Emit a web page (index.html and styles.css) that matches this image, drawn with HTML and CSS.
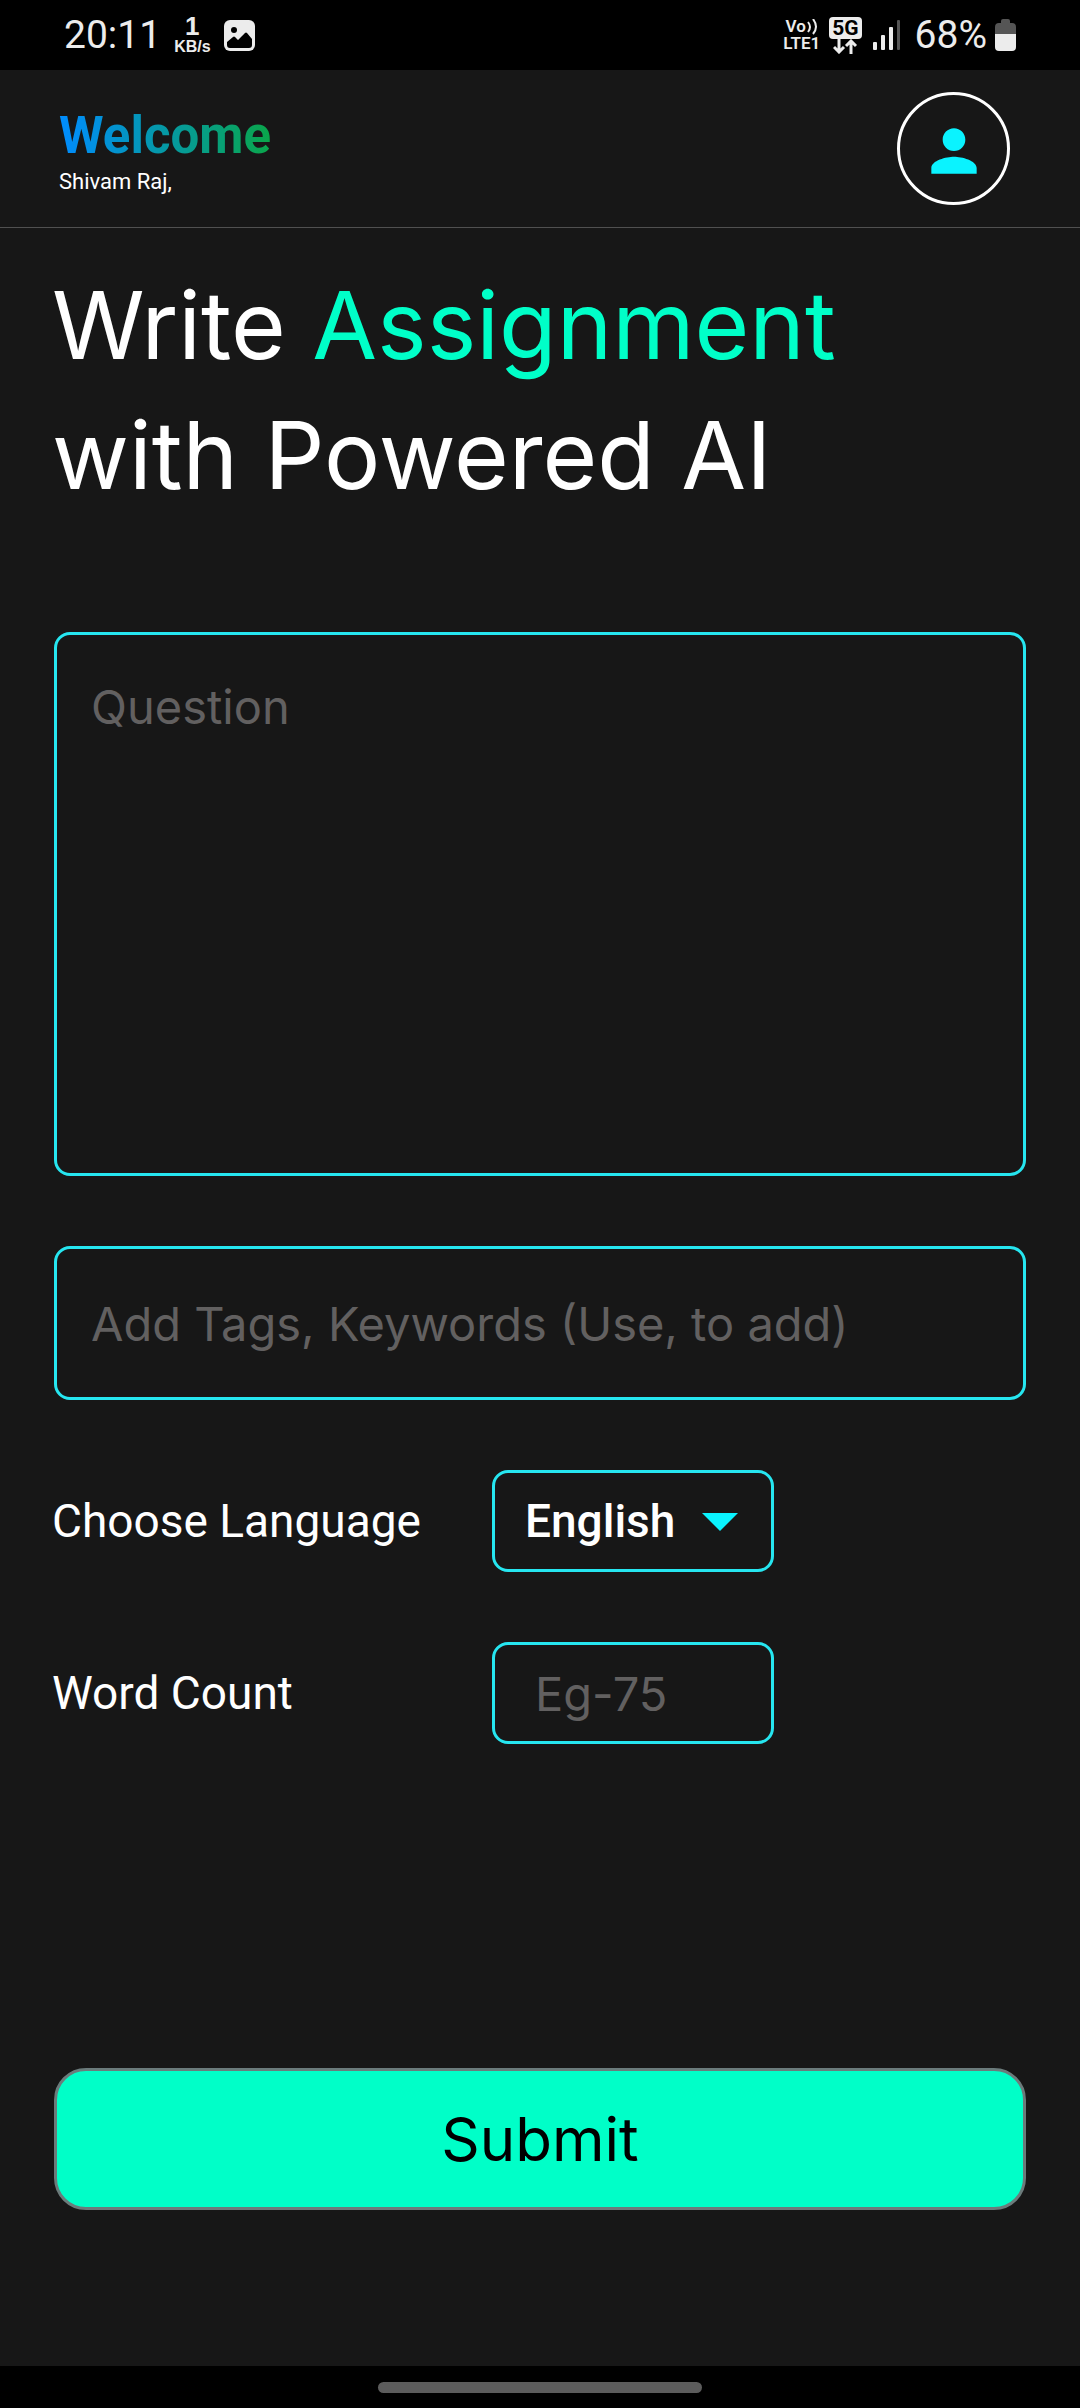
FILE: index.html
```html
<!DOCTYPE html>
<html lang="en">
<head>
<meta charset="utf-8">
<meta name="viewport" content="width=device-width, initial-scale=1">
<title>Write Assignment</title>
<link rel="stylesheet" href="styles.css">
</head>
<body>
<div class="status">
  <div class="status-group">
    <span class="clock">20:11</span>
    <span class="speed"><b class="speed-value">1</b><span class="speed-unit">KB/s</span></span>
    <svg class="picture" width="31" height="31" viewBox="0 0 31 31" aria-hidden="true">
      <rect width="31" height="31" rx="6" fill="#ececec"/>
      <circle cx="10" cy="10" r="3" fill="#000"/>
      <path d="M3 22 9 17q1-1 2 0l3 3 7-7q1-1 2 0l5 6v6q0 3-3 3H6q-3 0-3-3z" fill="#000"/>
    </svg>
  </div>
  <div class="status-group status-right">
    <span class="volte">
      <span class="volte-line">Vo<svg width="11" height="16" viewBox="0 0 11 16" fill="none" stroke="#ececec" stroke-width="2" aria-hidden="true"><path d="M1 3q4 5 0 10M6 0q6 8 0 15"/></svg></span>
      <span class="volte-line">LTE1</span>
    </span>
    <span class="network">
      <b class="badge">5G</b>
      <svg width="25" height="15" viewBox="0 0 25 15" fill="none" stroke="#ececec" stroke-width="3" aria-hidden="true"><path d="M6 0v13M1 8l5 5 5-5M18 15V2M13 7l5-5 5 5"/></svg>
    </span>
    <svg class="signal" width="28" height="30" viewBox="0 0 28 30" fill="#ececec" aria-hidden="true">
      <rect y="22" width="4" height="8" rx="1"/><rect x="8" y="15" width="4" height="15" rx="1"/><rect x="16" y="7" width="4" height="23" rx="1"/><rect x="24" width="3" height="30" rx="1" fill="#555"/>
    </svg>
    <span class="clock">68%</span>
    <svg class="battery" width="21" height="32" viewBox="0 0 21 32" aria-hidden="true">
      <path d="M6 4V2q0-2 2-2h5q2 0 2 2v2h2q4 0 4 4v7H0V8q0-4 4-4z" fill="#555"/>
      <path d="M0 15h21v13q0 4-4 4H4q-4 0-4-4z" fill="#ececec"/>
    </svg>
  </div>
</div>

<header class="header">
  <div class="greeting">
    <p class="welcome">Welcome</p>
    <p class="name">Shivam Raj,</p>
  </div>
  <button class="avatar" type="button" aria-label="Profile">
    <svg width="68" height="68" viewBox="0 0 24 24" fill="#0af3ff" aria-hidden="true"><path d="M12 12c2.21 0 4-1.79 4-4s-1.79-4-4-4-4 1.79-4 4 1.79 4 4 4zm0 2c-2.67 0-8 1.34-8 4v2h16v-2c0-2.66-5.33-4-8-4z"/></svg>
  </button>
</header>

<main class="main">
  <h1 class="title">Write <span class="accent">Assignment</span><br>with Powered AI</h1>
  <form class="form">
    <textarea class="field question" placeholder="Question" aria-label="Question"></textarea>
    <input class="field tags" type="text" placeholder="Add Tags, Keywords (Use, to add)" aria-label="Tags">
    <div class="row">
      <label class="label" for="language">Choose Language</label>
      <div class="select">
        <select class="field language" id="language"><option>English</option></select>
        <svg class="arrow" width="36" height="18" viewBox="0 0 36 18" aria-hidden="true"><path d="M0 0h36L18 18z" fill="#0af3ff"/></svg>
      </div>
    </div>
    <div class="row">
      <label class="label" for="count">Word Count</label>
      <input class="field count" id="count" type="text" inputmode="numeric" placeholder="Eg-75">
    </div>
    <button class="submit" type="submit">Submit</button>
  </form>
</main>

<div class="nav"><span class="handle"></span></div>
</body>
</html>
```
FILE: styles.css
```css
* { box-sizing: border-box; }

body {
  margin: 0;
  min-height: 100vh;
  display: flex;
  flex-direction: column;
  background: #171717;
  color: #fff;
  font-family: Roboto, sans-serif;
}

p, h1 { margin: 0; }

.status {
  display: flex;
  justify-content: space-between;
  align-items: center;
  height: 70px;
  padding: 0 64px;
  background: #000;
  color: #ececec;
}

.status-group { display: flex; align-items: center; gap: 13px; }
.status-right { gap: 9px; }
.clock { font-size: 39px; line-height: 48px; }

.speed {
  display: flex;
  flex-direction: column;
  align-items: center;
  font-family: "Liberation Sans", sans-serif;
  font-weight: 700;
}
.speed-value { font-size: 26px; line-height: 24px; }
.speed-unit { font-size: 16px; line-height: 18px; }

.volte { display: flex; flex-direction: column; align-items: center; }
.volte-line {
  display: flex;
  align-items: center;
  gap: 1px;
  font-size: 17px;
  line-height: 17px;
  font-weight: 600;
}

.network { display: flex; flex-direction: column; align-items: center; margin-right: 2px; }
.badge {
  padding: 0 3px;
  border-radius: 4px;
  background: #ececec;
  color: #000;
  font-size: 21px;
  line-height: 22px;
}

.signal { margin-right: 5px; }
.battery { margin-left: -1px; }

.header {
  display: flex;
  justify-content: space-between;
  align-items: center;
  height: 158px;
  padding: 0 70px 0 59px;
  border-bottom: 1px solid #505050;
}

.greeting { padding-top: 7px; }

.welcome {
  width: max-content;
  font-size: 51px;
  line-height: 60px;
  font-weight: 700;
  background: linear-gradient(90deg, #008cff, #0aa64a);
  background-clip: text;
  -webkit-background-clip: text;
  color: transparent;
}
.name { font-size: 22px; line-height: 32px; }

.avatar {
  display: flex;
  align-items: center;
  justify-content: center;
  width: 113px;
  height: 113px;
  padding: 4px 0 0;
  border: 3px solid #fff;
  border-radius: 50%;
  background: none;
}

.main { flex: 1; padding: 32px 54px 0 52px; }

.title {
  font-family: Inter, sans-serif;
  font-size: 94px;
  line-height: 130px;
  font-weight: 400;
}
.accent { color: #00ffc8; }

.form { display: flex; flex-direction: column; margin-top: 112px; }

.field {
  display: block;
  width: 100%;
  margin: 0;
  padding: 0 34px;
  border: 3px solid #26e6f0;
  border-radius: 16px;
  background: none;
  color: #fff;
  font-family: Inter, sans-serif;
  font-size: 47px;
  line-height: 60px;
  outline: none;
}
.field::placeholder { color: #626060; opacity: 1; }

.question, .tags { width: auto; margin-left: 2px; }
.question { height: 544px; padding-top: 42px; resize: none; }
.tags { height: 154px; margin-top: 70px; }

.row {
  display: grid;
  grid-template-columns: 440px 282px;
  align-items: center;
  margin-top: 70px;
}
.label { font-size: 46px; line-height: 60px; }

.select { position: relative; }
.language {
  height: 102px;
  padding: 0 30px;
  appearance: none;
  font-family: Roboto, sans-serif;
  font-size: 46px;
  font-weight: 500;
}
.arrow {
  position: absolute;
  top: 43px;
  right: 36px;
  pointer-events: none;
}
.count { height: 102px; padding: 0 40px; }

.submit {
  height: 142px;
  margin: 324px 0 0 2px;
  border: 3px solid #6b7b7b;
  border-radius: 32px;
  background: #00ffc8;
  color: #000;
  font-family: Inter, sans-serif;
  font-size: 60px;
}

.nav {
  display: flex;
  align-items: center;
  justify-content: center;
  height: 42px;
  background: #000;
}
.handle { width: 30%; height: 11px; border-radius: 6px; background: #5c5c5c; }
```
